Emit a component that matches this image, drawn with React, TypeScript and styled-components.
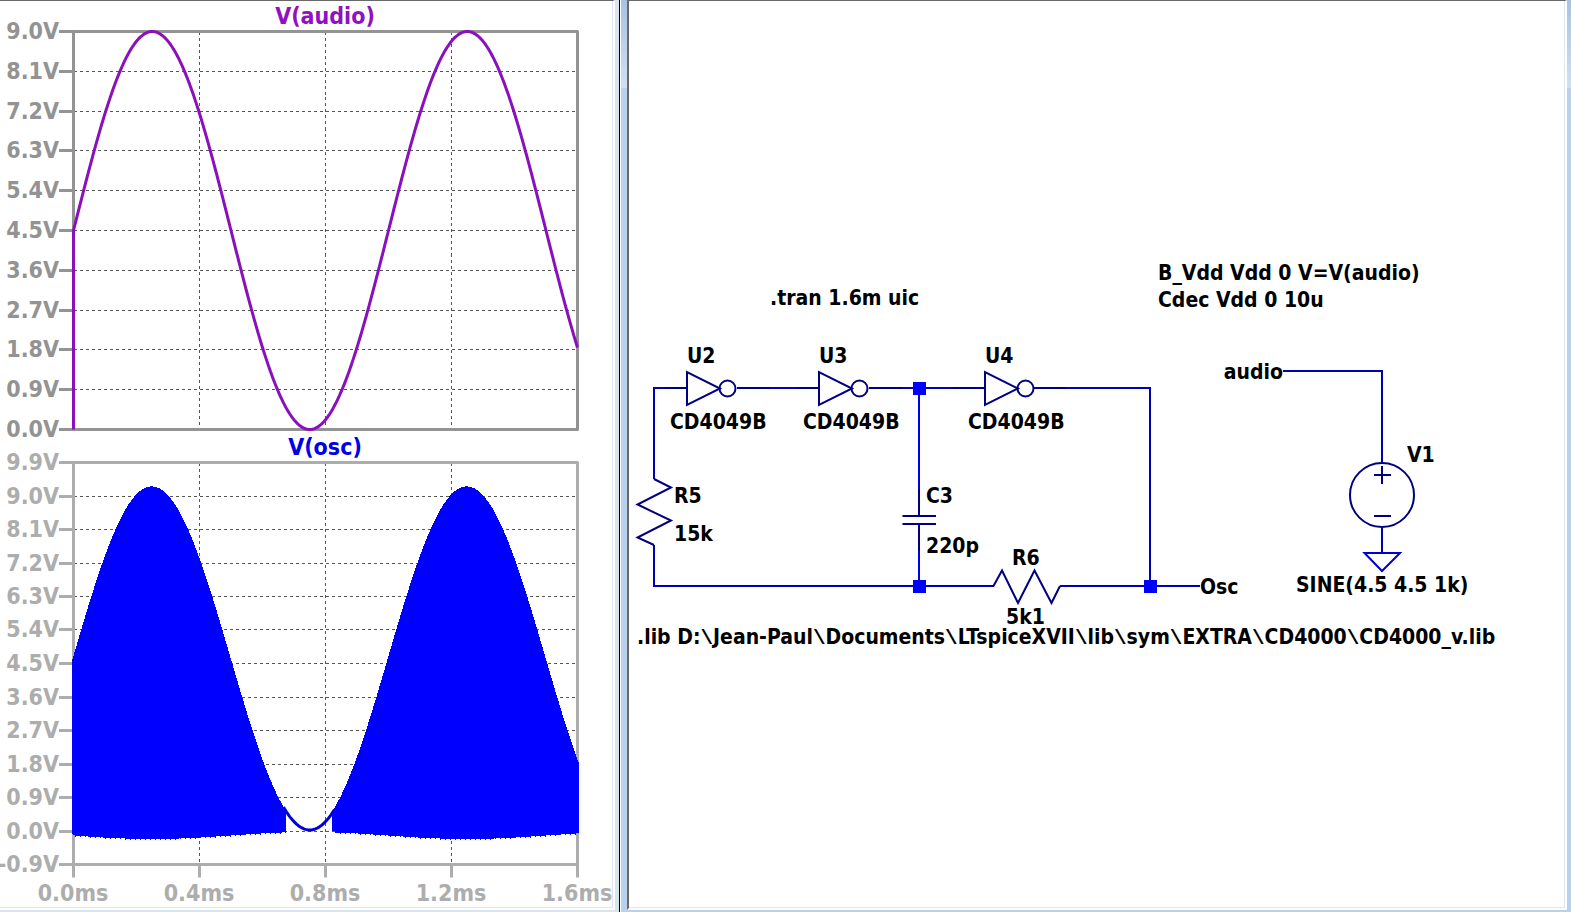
import React from "react";
import styled, { createGlobalStyle } from "styled-components";

const GlobalStyle = createGlobalStyle`
  * { box-sizing: border-box; }
  html, body { margin: 0; background: #fff; }
`;

const uiFont = `"DejaVu Sans Condensed", "Noto Sans", sans-serif`;

const Workspace = styled.main`
  display: grid;
  grid-template-columns: 620fr 951fr;
  min-height: 100vh;
  overflow: hidden;
`;

const PlotWindow = styled.section`
  display: flex;
  min-width: 0;
  border-right: 1px solid #000;
  padding: 0 4px 2px 0;
  background: #d9e4f1;
`;

const SchematicWindow = styled.section`
  display: flex;
  min-width: 0;
  border-left: 1px solid #fff;
  padding: 0 4px 2px 6px;
  background: linear-gradient(#a9c3df, #cfe0f2 88px, #b9d1ea 88px);
`;

const Client = styled.div<{ $sunken?: boolean }>`
  flex: 1;
  min-width: 0;
  background: #fff;
  border-top: 1px solid #696969;
  border-left: ${(p) => (p.$sunken ? "2px solid #696969" : "0")};
  border-right: 2px solid #fff;
  border-bottom: 2px solid #fff;
  box-shadow: inset -1px -1px 0 #dfe6ef;
`;

const Drawing = styled.svg`
  display: block;
  width: 100%;
  height: auto;
  overflow: visible;
`;

const AxisText = styled.text<{ $tone: string }>`
  font: bold 23px ${uiFont};
  fill: ${(p) => p.$tone};
`;

const TraceTitle = styled.text<{ $tone: string }>`
  font: bold 23px ${uiFont};
  fill: ${(p) => p.$tone};
  text-anchor: middle;
`;

const Label = styled.text`
  font: bold 21px ${uiFont};
  fill: #000;
  white-space: pre;
`;

const Separator = styled.tspan`
  font-family: "Liberation Mono", monospace;
`;

const LEFT = 73.5;
const RIGHT = 577.5;
const SPAN_MS = 1.6;

const audioAt = (ms: number) => 4.5 + 4.5 * Math.sin(2 * Math.PI * ms);
const msAt = (x: number) => ((x - LEFT) / (RIGHT - LEFT)) * SPAN_MS;

type PlotProps = {
  title: string;
  titleColor: string;
  frame: string;
  height: number;
  top: number;
  bottom: number;
  max: number;
  min: number;
  timeAxis?: boolean;
  trace: (y: (v: number) => number) => React.ReactNode;
};

function Plot({ title, titleColor, frame, height, top, bottom, max, min, timeAxis, trace }: PlotProps) {
  const y = (v: number) => bottom - ((v - min) / (max - min)) * (bottom - top);
  const count = Math.round((max - min) / 0.9);
  const levels = Array.from({ length: count + 1 }, (_, i) => max - i * 0.9);
  const times = [0, 0.4, 0.8, 1.2, 1.6];
  const xOf = (t: number) => LEFT + (t / SPAN_MS) * (RIGHT - LEFT);
  return (
    <Drawing viewBox={`0 0 613 ${height}`} role="img" aria-label={title}>
      <g stroke="#555" strokeDasharray="3 3" shapeRendering="crispEdges">
        {levels.slice(1, -1).map((v) => (
          <line key={v} x1={LEFT} x2={RIGHT} y1={Math.floor(y(v)) + 0.5} y2={Math.floor(y(v)) + 0.5} />
        ))}
        {times.slice(1, -1).map((t) => (
          <line key={t} x1={xOf(t)} x2={xOf(t)} y1={top} y2={bottom} />
        ))}
      </g>
      <g stroke={frame} strokeWidth={3} fill="none">
        <rect x={LEFT} y={top} width={RIGHT - LEFT} height={bottom - top} strokeLinejoin="round" />
        {levels.map((v) => (
          <line key={v} x1={59} x2={LEFT} y1={Math.floor(y(v)) + 0.5} y2={Math.floor(y(v)) + 0.5} />
        ))}
        {timeAxis && times.map((t) => <line key={t} x1={xOf(t)} x2={xOf(t)} y1={bottom} y2={bottom + 13} />)}
      </g>
      {levels.map((v) => (
        <AxisText key={v} $tone={frame} x={59} y={Math.floor(y(v)) + 8} textAnchor="end">
          {`${Math.abs(v) < 0.01 ? "0.0" : v.toFixed(1)}V`}
        </AxisText>
      ))}
      {timeAxis &&
        times.map((t) => (
          <AxisText key={t} $tone={frame} x={Math.floor(xOf(t))} y={bottom + 36} textAnchor="middle">
            {`${t.toFixed(1)}ms`}
          </AxisText>
        ))}
      <TraceTitle $tone={titleColor} x={325} y={top - 8}>
        {title}
      </TraceTitle>
      {trace(y)}
    </Drawing>
  );
}

function sinePoints(y: (v: number) => number, from: number, to: number) {
  const pts: string[] = [];
  for (let x = from; x <= to; x += 1) pts.push(`${x},${y(audioAt(msAt(x))).toFixed(1)}`);
  return pts.join(" ");
}

function audioTrace(y: (v: number) => number) {
  return (
    <polyline
      points={`${LEFT},${y(0)} ${sinePoints(y, LEFT, RIGHT)}`}
      fill="none"
      stroke="#8a10bc"
      strokeWidth={3}
      strokeLinejoin="round"
    />
  );
}

/* Each burst of oscillation is so dense that it reads as a filled lobe. */
function lobe(y: (v: number) => number, from: number, to: number) {
  const upper: string[] = [];
  const lower: string[] = [];
  for (let x = from; x < to; x += 1) {
    const v = audioAt(msAt(x + 1));
    const jitter = (x * 7) % 5 === 0 ? 1 : 0;
    const hi = Math.round(y(v * 1.022 + 0.06));
    const lo = Math.round(y(0) + 1 + (v / 9) * 7) + (x - from < 3 ? -1 : jitter);
    upper.push(`${x},${hi} ${x + 1},${hi}`);
    lower.unshift(`${x + 1},${lo} ${x},${lo}`);
  }
  return `${upper.join(" ")} ${lower.join(" ")}`;
}

function oscTrace(y: (v: number) => number) {
  return (
    <g>
      <g fill="#0000ff" shapeRendering="crispEdges">
        <polygon points={lobe(y, 72, 286)} />
        <polygon points={lobe(y, 332, 579)} />
      </g>
      <polyline points={sinePoints((v) => y(v * 1.02) - 1, 283.5, 334.5)} fill="none" stroke="#0000d8" strokeWidth={3} />
    </g>
  );
}

function Inverter({ x, name, nameX, partX }: { x: number; name: string; nameX: number; partX: number }) {
  return (
    <g>
      <g stroke="#000080" strokeWidth={2} fill="none">
        <path d={`M${x + 1} 372V405L${x + 34} 388.5Z`} />
        <circle cx={x + 41.5} cy={388.5} r={8} />
      </g>
      <Label x={nameX} y={363}>{name}</Label>
      <Label x={partX} y={429}>CD4049B</Label>
    </g>
  );
}

const Junction = ({ x, y }: { x: number; y: number }) => (
  <rect x={x} y={y} width={13} height={13} fill="#0000ff" shapeRendering="crispEdges" />
);

const LIBRARY = ["D:", "Jean-Paul", "Documents", "LTspiceXVII", "lib", "sym", "EXTRA", "CD4000", "CD4000_v.lib"];

function Schematic() {
  return (
    <Drawing viewBox="629 1 936 907" role="img" aria-label="Oscillator schematic">
      <g stroke="#0000b4" strokeWidth={2} fill="none">
        <path d="M687 388H654V479 M654 545V586H994 M737 388H819 M869 388H985 M1034 388H1150V586 M1060 586H1200" />
        <path d="M1283 371H1382V463 M1382 528V553" />
        <path d="M919 388V516 M919 524V586" stroke="#0000e6" />
        <path d="M1364.500 553H1400L1382 571Z" stroke="#0000c8" />
      </g>
      <g stroke="#000080" strokeWidth={2} fill="none">
        <path d="M665 388H687 M737 388H770 M797 388H819 M869 388H902 M953 388H985 M1034 388H1066 M919 490V516 M919 524V550" />
        <path d="M654 479L671 487.500L637.500 504.500L671 520.500L637.500 537.500L654 545" />
        <path d="M993.500 586L1002 570.500L1018 603L1034.500 570.500L1051.500 603L1060 586" />
        <path d="M902.500 516H936 M902.500 524H936" />
        <circle cx={1382} cy={495} r={32} />
        <path d="M1374 475H1391 M1382 466V484 M1374 516H1391" />
      </g>
      <Inverter x={686} name="U2" nameX={687} partX={670} />
      <Inverter x={818} name="U3" nameX={819} partX={803} />
      <Inverter x={984} name="U4" nameX={985} partX={968} />
      <Junction x={913} y={382} />
      <Junction x={913} y={580} />
      <Junction x={1144} y={580} />
      <Label x={770} y={305}>.tran 1.6m uic</Label>
      <Label x={1158} y={280}>B_Vdd Vdd 0 V=V(audio)</Label>
      <Label x={1158} y={307}>Cdec Vdd 0 10u</Label>
      <Label x={674} y={503}>R5</Label>
      <Label x={674} y={541}>15k</Label>
      <Label x={926} y={503}>C3</Label>
      <Label x={926} y={553}>220p</Label>
      <Label x={1012} y={565}>R6</Label>
      <Label x={1006} y={624}>5k1</Label>
      <Label x={1200} y={594}>Osc</Label>
      <Label x={1283} y={379} textAnchor="end">audio</Label>
      <Label x={1407} y={462}>V1</Label>
      <Label x={1296} y={592}>SINE(4.5 4.5 1k)</Label>
      <Label x={637} y={644}>
        {".lib "}
        {LIBRARY.map((part, i) => (
          <React.Fragment key={i}>
            {i > 0 && <Separator>{"\\"}</Separator>}
            {part}
          </React.Fragment>
        ))}
      </Label>
    </Drawing>
  );
}

export default function App() {
  return (
    <>
      <GlobalStyle />
      <Workspace>
        <PlotWindow>
          <Client>
            <Plot
              title="V(audio)"
              titleColor="#9010c4"
              frame="#939393"
              height={432}
              top={30.5}
              bottom={428.5}
              max={9}
              min={0}
              trace={audioTrace}
            />
            <Plot
              title="V(osc)"
              titleColor="#0000e6"
              frame="#adadad"
              height={474}
              top={29.5}
              bottom={431.5}
              max={9.9}
              min={-0.9}
              timeAxis
              trace={oscTrace}
            />
          </Client>
        </PlotWindow>
        <SchematicWindow>
          <Client $sunken>
            <Schematic />
          </Client>
        </SchematicWindow>
      </Workspace>
    </>
  );
}
